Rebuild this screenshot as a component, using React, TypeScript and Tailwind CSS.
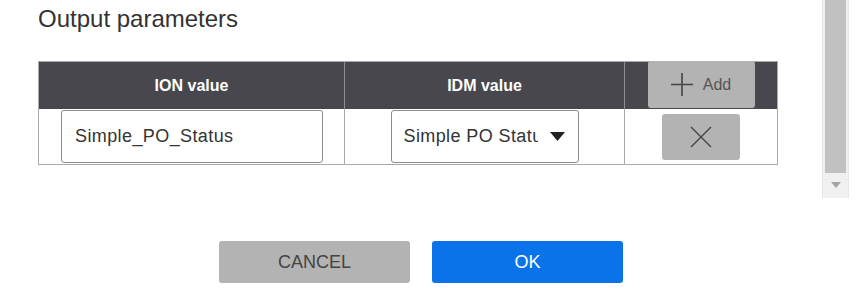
import React from "react";

export default function App() {
  const font = { fontFamily: '"Liberation Sans", Arial, sans-serif' };
  return (
    <div className="w-[859px] h-[298px] bg-white flex flex-col overflow-hidden" style={font}>
      <div className="h-[198px] flex">
        <div className="flex-1 pl-[38px]">
          <h2 className="text-[24px] leading-[28px] text-[#333] mt-[5px] font-normal">Output parameters</h2>
          <div className="mt-[28px] w-[740px] border border-[#aaaaaa]">
            <div className="flex h-[47px] bg-[#48474d] text-white text-[16px] font-bold">
              <div className="w-[306px] flex items-center justify-center border-r border-[#8e8e93]">ION value</div>
              <div className="w-[280px] flex items-center justify-center border-r border-[#8e8e93]">IDM value</div>
              <div className="flex-1 flex items-start justify-center">
                <button className="w-[107px] h-[47px] -mt-px bg-[#b3b3b3] rounded-[3px] flex items-center justify-center gap-[10px] text-[#555] font-normal text-[16px]">
                  <svg width="22" height="23" viewBox="0 0 22 23">
                    <path d="M0 11.5H22M11 0V23" stroke="#444" strokeWidth="1.6" fill="none" />
                  </svg>
                  <span>Add</span>
                </button>
              </div>
            </div>
            <div className="flex h-[55px] bg-white">
              <div className="w-[306px] flex items-center pl-[22px] border-r border-[#aaaaaa]">
                <div className="w-[262px] h-[53px] border border-[#8c8c8c] rounded-[3px] flex items-center pl-[13px] text-[18px] tracking-[0.4px] text-[#333]">
                  Simple_PO_Status
                </div>
              </div>
              <div className="w-[280px] flex items-center justify-center border-r border-[#aaaaaa]">
                <div className="w-[188px] h-[53px] border border-[#8c8c8c] rounded-[3px] flex items-center pl-[12px] pr-[13px] text-[18px] tracking-[0.4px] text-[#333]">
                  <span className="w-[134px] overflow-hidden whitespace-nowrap">Simple PO Status</span>
                  <svg width="15" height="9" viewBox="0 0 15 9" className="ml-[12px]">
                    <path d="M0 0H15L7.5 9Z" fill="#222" />
                  </svg>
                </div>
              </div>
              <div className="flex-1 flex items-center justify-center">
                <button className="w-[78px] h-[46px] bg-[#b3b3b3] rounded-[3px] flex items-center justify-center">
                  <svg width="22" height="22" viewBox="0 0 22 22">
                    <path d="M1 1L21 21M21 1L1 21" stroke="#444" strokeWidth="1.4" fill="none" />
                  </svg>
                </button>
              </div>
            </div>
          </div>
        </div>
        <div className="w-[27px] h-[198px] bg-[#f0f0f0] border-x border-[#e6e6e6] flex flex-col items-center">
          <div className="w-[21px] h-[173px] bg-[#c1c1c1]"></div>
          <svg width="10" height="6" viewBox="0 0 10 6" className="mt-[9px]">
            <path d="M0 0H10L5 6Z" fill="#a3a3a3" />
          </svg>
        </div>
        <div className="w-[10px]"></div>
      </div>
      <div className="flex pl-[219px] pt-[43px] gap-[22px]">
        <button className="w-[191px] h-[42px] bg-[#b3b3b3] rounded-[3px] text-[18px] text-[#444]">CANCEL</button>
        <button className="w-[191px] h-[42px] bg-[#0a73ea] rounded-[3px] text-[18px] text-white">OK</button>
      </div>
    </div>
  );
}
